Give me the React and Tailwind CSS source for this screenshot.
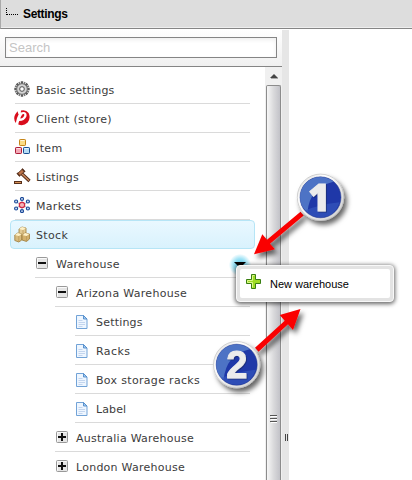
import React from "react";

function GearIcon() {
  return (
    <svg width="16" height="16" viewBox="0 0 16 16">
      <path d="M8 0.300v15.400M0.300 8h15.400M2.600 2.600l10.800 10.800M2.600 13.400L13.400 2.600" stroke="#5c5c5c" strokeWidth="2.400" />
      <path d="M5 1l6 14M11 1L5 15M1 5l14 6M1 11l14-6" stroke="#777" strokeWidth="1.400" />
      <circle cx="8" cy="8" r="5.300" fill="#c4c4c4" stroke="#777" strokeWidth="0.9" />
      <circle cx="8" cy="8" r="3.900" fill="none" stroke="#dedede" strokeWidth="0.8" />
      <circle cx="8" cy="8" r="2.300" fill="#fff" stroke="#555" />
    </svg>
  );
}

function ClientIcon() {
  return (
    <svg width="16" height="16" viewBox="0 0 16 16">
      <path d="M4 1.200Q0.300 4 0.200 8.200Q0.300 11 1.800 13Q2.500 8 4.700 4.200Q3.400 3 4 1.200Z" fill="#d90d1c" />
      <path d="M7 0.600Q12-0.500 14.600 3Q17 8 13.700 12.500Q9.500 16.500 4.300 14.500Q4.500 12.700 5.200 11Q10.500 11 12.300 6.800Q13.500 2.500 9.700 2Q8 1.900 6.800 2.600Z" fill="#d90d1c" />
      <path d="M8.800 4Q10.500 3.500 10.300 5.200Q9.600 8 6.200 8.600Q7 5.500 8.800 4Z" fill="#d90d1c" />
    </svg>
  );
}

function ItemIcon() {
  return (
    <svg width="16" height="16" viewBox="0 0 16 16">
      <rect x="5.500" y="0.500" width="6" height="6" rx="0.7" fill="#fbdc86" stroke="#c68519" />
      <rect x="1.500" y="8.500" width="6" height="6" rx="0.7" fill="#f3aab7" stroke="#ad1c38" />
      <rect x="9.500" y="8.500" width="6" height="6" rx="0.7" fill="#b6dcf5" stroke="#184f92" />
      <path d="M6.500 1.500h4M2.500 9.500h4M10.500 9.500h4" stroke="#fff" opacity="0.7" />
    </svg>
  );
}

function GavelIcon() {
  return (
    <svg width="17" height="17" viewBox="0 0 17 17">
      <path d="M7 5l8.500 8" stroke="#4f2815" strokeWidth="3.200" />
      <path d="M7 5l8 7.500" stroke="#cc895c" strokeWidth="1.500" />
      <path d="M3.500 5.500L8.500 1L10.500 3.500L5.500 8Z" fill="#bd744a" stroke="#57301c" strokeWidth="0.9" />
      <path d="M8 0.800l3 3.200M3 5l3 3.300" stroke="#57301c" strokeWidth="1.500" />
      <rect x="0.500" y="13.500" width="7" height="2" fill="#d69157" stroke="#57301c" />
    </svg>
  );
}

const satellites = [[8, 1.900], [13.900, 4.500], [13.900, 11.500], [8, 14.100], [2.100, 11.500], [2.100, 4.500]];

function MarketsIcon() {
  return (
    <svg width="16" height="16" viewBox="0 0 16 16">
      <path d="M8 2v12M2 5l12 6M2 11l12-6" stroke="#8796b5" strokeWidth="0.8" />
      {satellites.map(([x, y], i) => (
        <circle key={i} cx={x} cy={y} r="1.500" fill="#d6e9fa" stroke="#1b4898" strokeWidth="1.200" />
      ))}
      <circle cx="8" cy="8" r="2.700" fill="#f7b5b9" stroke="#d02943" strokeWidth="1.200" />
    </svg>
  );
}

function StockIcon() {
  return (
    <svg width="17" height="17" viewBox="0 0 17 17">
      <g stroke="#9d7b38" strokeWidth="0.8" strokeLinejoin="round">
        <path d="M5 3L8 1l4 1v5l-3 2-4-1Z" fill="#e2ca93" />
        <path d="M0.800 9l3-2 4 1v6l-3 2-4-1.500Z" fill="#d8bb7d" />
        <path d="M8 9l3-2 4.500 1v5l-3 2.500-4.500-1.500Z" fill="#d2b06c" />
      </g>
      <path d="M5 3L8 1l4 1-3 2ZM0.800 9l3-2 4 1-3 2ZM8 9l3-2 4.500 1-3 2Z" fill="#fff2c9" />
      <path d="M9 4v5M4.800 10v6M12.500 10v5" stroke="#b89756" strokeWidth="0.700" />
    </svg>
  );
}

function PageIcon() {
  return (
    <svg width="12" height="14" viewBox="0 0 12 14">
      <path d="M0.500 0.500h7l3.500 3.500v9.500h-10.500Z" fill="#eef6ff" stroke="#72a3d7" />
      <path d="M7.500 0.500v3.500H11Z" fill="#a6cdf2" stroke="#4f8ac9" strokeWidth="0.9" />
      <path d="M2.500 5.500h4M2.500 7.500h6.500M2.500 9.500h6.500M2.500 11.500h4" stroke="#c3d5ee" />
    </svg>
  );
}

function ToggleIcon({ plus }) {
  return (
    <svg width="12" height="12" viewBox="0 0 12 12">
      <rect x="0.500" y="0.500" width="11" height="11" rx="1" fill="#e5e5e5" stroke="#999" />
      <path d="M1.500 10.500v-9h9" fill="none" stroke="#fafafa" />
      <path d={plus ? "M2 6h8M6 2v8" : "M2 6h8"} stroke="#111" strokeWidth="2" />
    </svg>
  );
}

const rows = [
  { label: "Basic settings", level: 0, icon: <GearIcon />, tracking: "tracking-[0.14px]" },
  { label: "Client (store)", level: 0, icon: <ClientIcon />, tracking: "tracking-[0.3px]" },
  { label: "Item", level: 0, icon: <ItemIcon />, tracking: "tracking-[0.4px]" },
  { label: "Listings", level: 0, icon: <GavelIcon />, tracking: "tracking-[0.1px]" },
  { label: "Markets", level: 0, icon: <MarketsIcon />, tracking: "tracking-[0.3px]" },
  { label: "Stock", level: 0, icon: <StockIcon />, active: true, tracking: "tracking-[0.35px]" },
  { label: "Warehouse", level: 1, icon: <ToggleIcon />, arrow: true, tracking: "tracking-[0.3px]" },
  { label: "Arizona Warehouse", level: 2, icon: <ToggleIcon />, tracking: "tracking-[0.3px]" },
  { label: "Settings", level: 3, icon: <PageIcon />, tracking: "tracking-[0.2px]" },
  { label: "Racks", level: 3, icon: <PageIcon />, tracking: "tracking-[0.4px]" },
  { label: "Box storage racks", level: 3, icon: <PageIcon />, tracking: "tracking-[0.32px]" },
  { label: "Label", level: 3, icon: <PageIcon />, tracking: "tracking-[0.1px]" },
  { label: "Australia Warehouse", level: 2, icon: <ToggleIcon plus />, tracking: "tracking-[0.25px]" },
  { label: "London Warehouse", level: 2, icon: <ToggleIcon plus />, tracking: "tracking-[0.25px]" },
];

const indents = ["ml-[5px]", "ml-[25px]", "ml-[45px]", "ml-[65px]"];

function TreeRow({ row }) {
  const box = row.active
    ? "rounded-[4px] border border-[#b6e5f6] bg-gradient-to-b from-[#e9f8ff] to-[#d9f2fd] pl-[4px]"
    : `${indents[row.level]} mr-[5px] border-b border-[#dadada]`;
  return (
    <div className={`flex h-[29px] shrink-0 items-center ${box}`}>
      <span className={`flex w-[21px] shrink-0 items-center ${row.level === 0 ? "-ml-px mr-px" : "pl-px"} ${row.level === 3 ? "pt-[2px]" : ""}`}>{row.icon}</span>
      <span className={`whitespace-nowrap pt-[3px] leading-4 text-[#3c3c3c] ${row.tracking}`}>{row.label}</span>
      {row.arrow && (
        <span className="-mr-px ml-auto mt-1 flex h-[22px] w-[22px] items-center justify-center rounded-full bg-[radial-gradient(circle,#65cbea_10%,#9de2f5_40%,transparent_72%)]">
          <svg width="12" height="7" viewBox="0 0 12 7"><path d="M0 0h12L6 6Z" fill="#000" /></svg>
        </span>
      )}
    </div>
  );
}

function StepBadge({ x, y, digit }) {
  const one = digit === "1";
  return (
    <g>
      <circle cx={x} cy={y} r="23.200" fill="url(#rim)" stroke="#c2c2c2" strokeWidth="0.7" filter="url(#shadow)" />
      <circle cx={x} cy={y} r="20.500" fill="#1f38a8" stroke="#263c8c" strokeWidth="0.5" />
      <path d={`M${x - 19.500} ${y + 6} A20.300 20.300 0 0 1 ${x + 13} ${y - 15.500} Q${x - 11} ${y - 10} ${x - 13} ${y + 15} Q${x - 18} ${y + 11} ${x - 19.500} ${y + 6}Z`} fill="#4d73c5" />
      <path d={`M${x - 15} ${y + 13} Q${x} ${y + 7} ${x + 19} ${y + 5} Q${x + 14} ${y + 20} ${x} ${y + 20} Q${x - 10} ${y + 20} ${x - 15} ${y + 13}`} fill="#3457bc" opacity="0.7" />
      <text
        x={one ? x - 1.500 : x}
        y={one ? y + 13.300 : y + 12.800}
        textAnchor="middle"
        fill="#ececec"
        fontFamily={one ? "Open Sans, sans-serif" : "Liberation Sans, sans-serif"}
        fontSize={one ? 37 : 38}
        fontWeight="800"
        stroke="#ececec"
        strokeWidth="1"
        filter="url(#digitShadow)"
      >
        {digit}
      </text>
    </g>
  );
}

export default function App() {
  return (
    <div className="relative flex h-[480px] w-[412px] flex-col overflow-hidden bg-white font-['DejaVu_Sans',sans-serif] text-[11px]">
      <header className="flex h-[29px] shrink-0 items-center border-b border-l border-b-[#858585] border-l-[#aaa] bg-[#ddd] shadow-[inset_0_-1px_#eee]">
        <span className="mb-[5px] ml-[5px] h-[7px] w-[12px] border-b border-l border-dotted border-black" />
        <span className="ml-[5px] font-['Liberation_Sans',sans-serif] text-[12px] font-bold leading-4 tracking-[-0.35px] text-black">Settings</span>
      </header>
      <main className="flex min-h-0 flex-1">
        <aside className="flex w-[282px] shrink-0 flex-col">
          <div className="flex h-[38px] shrink-0 items-center border-b border-[#858585] bg-gradient-to-b from-white to-[#f0f0f0] pl-[5px]">
            <div className="mb-px h-[21px] w-[272px] border border-[#858585] bg-white pl-[3px] font-['Liberation_Sans',sans-serif] text-[13px] leading-[20px] text-[#c5c5c5] shadow-[inset_0_2px_4px_#eee]">Search</div>
          </div>
          <div className="flex min-h-0 flex-1">
            <nav className="flex w-[265px] shrink-0 flex-col pl-[10px] pr-[10px] pt-[8px]">
              {rows.map((row) => <TreeRow key={row.label} row={row} />)}
            </nav>
            <div className="flex w-[17px] flex-col bg-[#f0f0f0]">
              <div className="flex h-[18px] shrink-0 items-center justify-center">
                <svg width="8" height="5" viewBox="0 0 8 5"><path d="M4 0l4 4H0Z" fill="#444" /><path d="M1 4.500h7" stroke="#aaa" /></svg>
              </div>
              <div className="ml-[1px] flex w-[15px] flex-1 flex-col items-center rounded-t-[2px] border border-b-0 border-[#8c8c8c] bg-gradient-to-r from-[#f7f7f7] via-[#dadadc] to-[#c2c2c8] pt-[329px]">
                <svg width="7" height="9" viewBox="0 0 7 9"><path d="M0 .5h7M0 3.500h7M0 6.500h7" stroke="#555" /><path d="M1 1.500h6M1 4.500h6M1 7.500h6" stroke="#fff" /></svg>
              </div>
            </div>
          </div>
        </aside>
        <div className="mt-px flex w-[7px] shrink-0 justify-end bg-[#e6e6e6] pr-px pt-[404px]">
          <span className="h-[7px] w-[3px] border-x border-[#444]" />
        </div>
        <section className="flex-1 bg-white" />
      </main>

      <div className="absolute left-[236px] top-[265px] flex h-[37px] w-[158px] items-center rounded-[4px] border border-[#f8f8f8] bg-[#e3e3e3] p-[3px] shadow-[0_1px_4px_1px_rgba(0,0,0,0.6)]">
        <div className="flex h-full w-full items-center rounded-[2px] bg-white pl-[6px]">
          <svg className="-mt-1" width="15" height="16" viewBox="0 0 15 16">
            <path d="M5.500 0.500h4v5h5v4h-5v5h-4v-5h-5v-4h5Z" fill="#9edc25" stroke="#397f12" />
            <path d="M6.500 13.500V8.500H1.500V6.500h5V1.500h2" fill="none" stroke="#dcf88c" />
          </svg>
          <span className="ml-[9px] whitespace-nowrap font-['Liberation_Sans',sans-serif] text-[11px] leading-4 text-black">New warehouse</span>
        </div>
      </div>

      <svg className="pointer-events-none absolute left-0 top-0" width="412" height="480" viewBox="0 0 412 480">
        <defs>
          <linearGradient id="rim" x1="0" y1="0" x2="1" y2="1"><stop stopColor="#d2d2d2" /><stop offset=".3" stopColor="#fff" /><stop offset="1" stopColor="#ccc" /></linearGradient>
          <filter id="shadow" x="-30%" y="-30%" width="170%" height="170%"><feDropShadow dx="3" dy="4" stdDeviation="2.500" floodOpacity=".6" /></filter>
          <filter id="digitShadow"><feDropShadow dx="1" dy="1" stdDeviation=".5" floodColor="#142664" floodOpacity=".6" /></filter>
        </defs>
        <g fill="#fa0505" filter="url(#shadow)">
          <path d="M254 254.300L262.300 234.300L267 239.800L300.500 211.700L303.700 215.600L270 243.800L275 249.300Z" />
          <path d="M300.500 309L293 330L288 324.200L258.500 351.700L255 347.800L284.700 320.700L279.700 315Z" />
        </g>
        <StepBadge x={320.500} y={197.300} digit="1" />
        <StepBadge x={236.700} y={364.700} digit="2" />
      </svg>
    </div>
  );
}
